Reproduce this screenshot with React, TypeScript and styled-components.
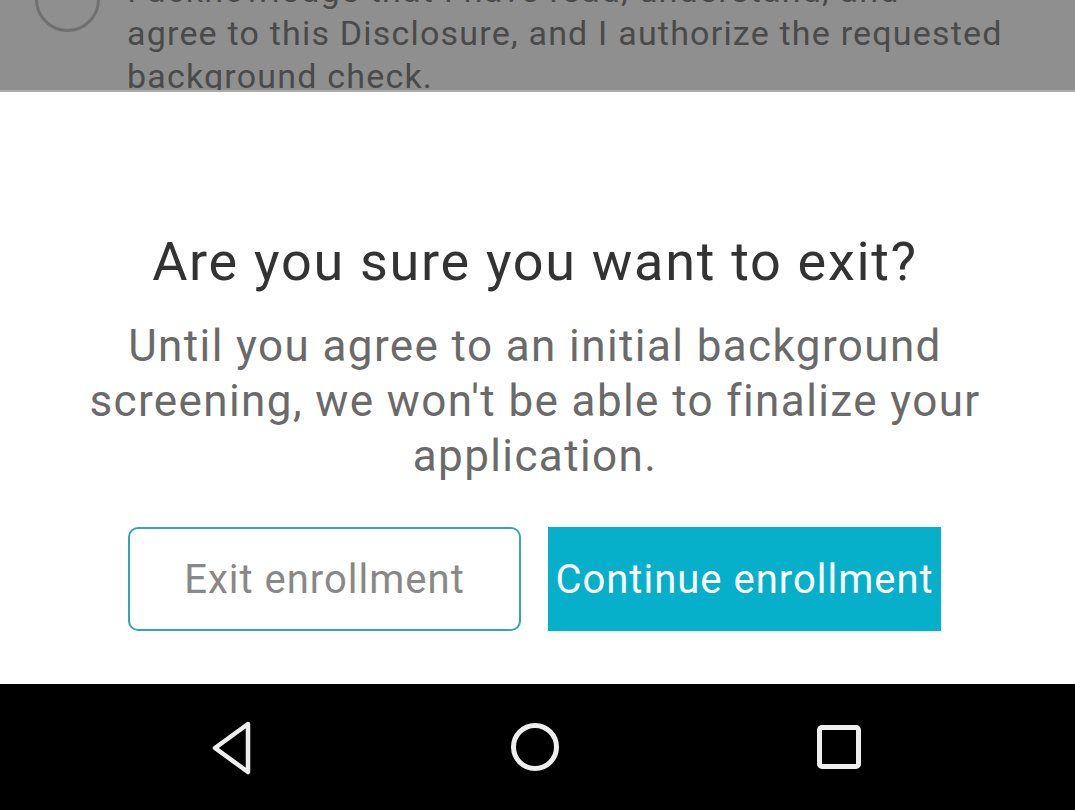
import styled, { createGlobalStyle } from "styled-components";

const GlobalStyle = createGlobalStyle`
    html, body {
        margin: 0;
        padding: 0;
        background: #FFF;
    }
    #root {
        width: 1075px;
        height: 810px;
        overflow: hidden;
        font-family: Roboto, "Liberation Sans", sans-serif;
    }
`;

const Screen = styled.div`
    width: 1075px;
    height: 810px;
    display: flex;
    flex-direction: column;
`;

const Backdrop = styled.div`
    height: 90px;
    flex-shrink: 0;
    overflow: hidden;
    background: #8F8F8F;
    border-bottom: 2px solid #ABABAB;
    display: flex;
    align-items: flex-start;
    gap: 27px;
    padding-left: 35px;
`;

const Radio = styled.div`
    width: 59px;
    height: 59px;
    flex-shrink: 0;
    border-radius: 50%;
    border: 3px solid #707070;
    margin-top: -33px;
`;

const Consent = styled.div`
    margin-top: -31px;
    color: #4A4A4A;
    font-size: 34px;
    line-height: 43px;
    letter-spacing: 1.2px;
    white-space: nowrap;
`;

const Dialog = styled.div`
    flex: 1;
    background: #FFF;
    display: flex;
    flex-direction: column;
    align-items: center;
    padding-top: 138px;
    padding-right: 5px;
`;

const Title = styled.h1`
    margin: 0;
    color: #333;
    font-size: 54px;
    font-weight: 400;
    line-height: 64px;
    letter-spacing: 1.7px;
    text-align: center;
`;

const Message = styled.p`
    margin: 25px 0 0;
    width: 920px;
    color: #6A6A6A;
    font-size: 44px;
    line-height: 55px;
    letter-spacing: 1.4px;
    text-align: center;
`;

const Actions = styled.div`
    display: flex;
    gap: 27px;
    margin-top: 43px;
    padding-right: 1px;
`;

const Button = styled.button<{ $primary?: boolean }>`
    width: 393px;
    height: 104px;
    box-sizing: border-box;
    font-family: Roboto, "Liberation Sans", sans-serif;
    font-size: 40px;
    letter-spacing: 1px;
    padding: 0;
    cursor: pointer;
    border-radius: ${p => (p.$primary ? "0" : "10px")};
    border: ${p => (p.$primary ? "none" : "2px solid #3AA3B3")};
    background: ${p => (p.$primary ? "#06AFCA" : "#FFF")};
    color: ${p => (p.$primary ? "#FFF" : "#888")};
`;

const NavBar = styled.div`
    height: 126px;
    flex-shrink: 0;
    background: #000;
    display: flex;
    align-items: center;
    justify-content: space-between;
    padding: 0 206px 0 201px;
    box-sizing: border-box;
`;

const NavIcon = styled.svg`
    width: 60px;
    height: 60px;
    color: #EEE;
`;

function App() {
  return (
    <>
      <GlobalStyle />
      <Screen>
        <Backdrop>
          <Radio />
          <Consent>
            I acknowledge that I have read, understand, and
            <br />
            agree to this Disclosure, and I authorize the requested
            <br />
            background check.
          </Consent>
        </Backdrop>
        <Dialog>
          <Title>Are you sure you want to exit?</Title>
          <Message>
            Until you agree to an initial background screening, we won't be able to finalize your application.
          </Message>
          <Actions>
            <Button>Exit enrollment</Button>
            <Button $primary>Continue enrollment</Button>
          </Actions>
        </Dialog>
        <NavBar>
          <NavIcon viewBox="0 0 60 60" fill="none">
            <path d="M47 7 L14 31 L47 55 Z" stroke="currentColor" strokeWidth="4.5" strokeLinejoin="round" />
          </NavIcon>
          <NavIcon viewBox="0 0 60 60" fill="none">
            <circle cx="30" cy="30" r="21.5" stroke="currentColor" strokeWidth="5" />
          </NavIcon>
          <NavIcon viewBox="0 0 60 60" fill="none">
            <rect x="10.5" y="10.5" width="39" height="39" rx="2.5" stroke="currentColor" strokeWidth="5" />
          </NavIcon>
        </NavBar>
      </Screen>
    </>
  );
}

export default App;
